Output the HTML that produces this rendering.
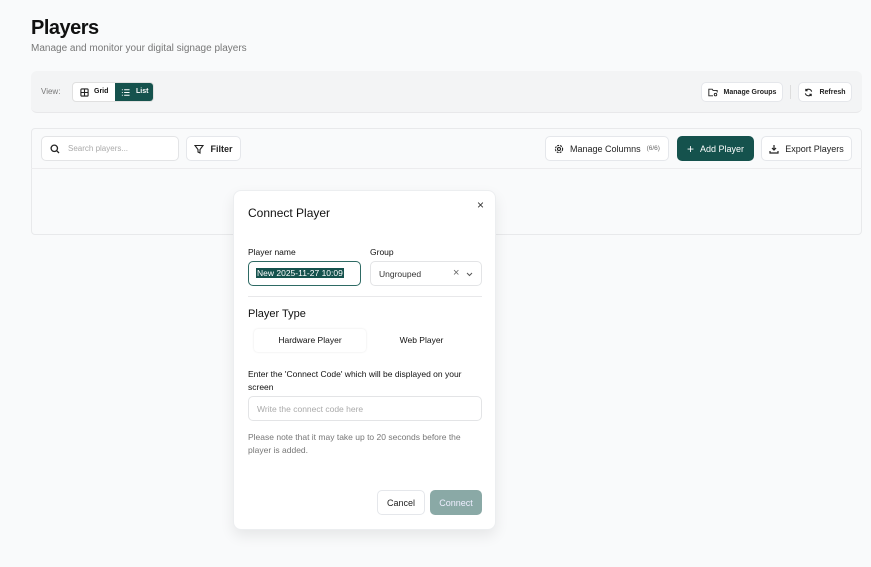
<!DOCTYPE html>
<html><head><style>
*{box-sizing:border-box;margin:0;padding:0}
body{width:871px;height:567px;background:#f9fafb;font-family:"Liberation Sans",sans-serif;color:#111;position:relative;overflow:hidden}
.abs{position:absolute}
.btn{position:absolute;background:#fff;border:1px solid #e5e7eb;border-radius:5px;display:flex;align-items:center;justify-content:center;gap:6px;font-size:9px;font-weight:bold;color:#222}
svg{display:block}
</style></head><body>
<div class="abs" style="left:31px;top:17px;font-size:20px;font-weight:bold;letter-spacing:-0.5px">Players</div>
<div class="abs" style="left:31px;top:43px;font-size:10px;color:#777">Manage and monitor your digital signage players</div>

<div class="abs" style="left:31px;top:71px;width:831px;height:42px;background:#f3f4f5;border-radius:6px;border-bottom:1px solid #e8e8ea"></div>
<div class="abs" style="left:41px;top:87px;font-size:8px;color:#777">View:</div>
<div class="abs" style="left:72px;top:82px;width:82px;height:20px;border:1px solid #e0e0e0;border-radius:4px;background:#fff;overflow:hidden">
  <div class="abs" style="left:7px;top:5px"><svg width="9" height="9" viewBox="0 0 10 10" fill="none" stroke="#222" stroke-width="1.2"><rect x="1" y="1" width="8" height="8" rx="1"/><path d="M5 1v8M1 5h8"/></svg></div>
  <div class="abs" style="left:21px;top:0;line-height:18px;font-size:7px;font-weight:bold">Grid</div>
  <div class="abs" style="left:42px;top:0;width:40px;height:20px;background:#15524d;color:#fff">
    <div class="abs" style="left:6px;top:5px"><svg width="9" height="9" viewBox="0 0 10 10" fill="none" stroke="#fff" stroke-width="1.1"><path d="M1 2h1M1 5h1M1 8h1M3.5 2h6M3.5 5h6M3.5 8h6"/></svg></div>
    <div class="abs" style="left:21px;top:0;line-height:18px;font-size:7px;font-weight:bold">List</div>
  </div>
</div>
<div class="btn" style="left:701px;top:82px;width:82px;height:20px;font-size:7px"><svg width="10" height="9" viewBox="0 0 12 10" fill="none" stroke="#222" stroke-width="1.1"><path d="M6 9H1V1h4l1 1.5h5V5"/><circle cx="9" cy="7.5" r="1.5"/></svg>Manage Groups</div>
<div class="abs" style="left:790px;top:85px;width:1px;height:14px;background:#ddd"></div>
<div class="btn" style="left:798px;top:82px;width:54px;height:20px;font-size:7px"><svg width="9" height="9" viewBox="0 0 10 10" fill="none" stroke="#222" stroke-width="1.2"><path d="M8.5 4A3.6 3.6 0 0 0 2 3M1.5 6A3.6 3.6 0 0 0 8 7M2 1v2h2M8 9V7H6"/></svg>Refresh</div>

<div class="abs" style="left:31px;top:128px;width:831px;height:107px;background:#f9fafb;border:1px solid #e8e9eb;border-radius:4px"></div>
<div class="abs" style="left:31px;top:168px;width:831px;height:1px;background:#ececee"></div>
<div class="abs" style="left:41px;top:136px;width:138px;height:25px;background:#fff;border:1px solid #e3e4e6;border-radius:5px">
  <div class="abs" style="left:8px;top:7px"><svg width="10" height="10" viewBox="0 0 10 10" fill="none" stroke="#222" stroke-width="1.3"><circle cx="4.3" cy="4.3" r="3.2"/><path d="M6.7 6.7L9 9"/></svg></div>
  <div class="abs" style="left:26px;top:7px;font-size:8px;color:#aaa">Search players...</div>
</div>
<div class="btn" style="left:186px;top:136px;width:55px;height:25px"><svg width="10" height="10" viewBox="0 0 10 10" fill="none" stroke="#222" stroke-width="1.1"><path d="M1 1.5h8L6 5.5V9L4 8V5.5z"/></svg>Filter</div>
<div class="btn" style="left:545px;top:136px;width:124px;height:25px;font-weight:normal"><svg width="10" height="10" viewBox="0 0 10 10" fill="none" stroke="#222" stroke-width="1.1"><circle cx="5" cy="5" r="1.5"/><circle cx="5" cy="5" r="3.6" stroke-dasharray="2 1"/></svg>Manage Columns <span style="font-size:6.5px;color:#666">(6/6)</span></div>
<div class="btn" style="left:677px;top:136px;width:77px;height:25px;background:#15524d;border-color:#15524d;color:#fff;font-weight:normal"><span style="font-size:12px">+</span>Add Player</div>
<div class="btn" style="left:761px;top:136px;width:91px;height:25px;font-weight:normal"><svg width="10" height="10" viewBox="0 0 10 10" fill="none" stroke="#222" stroke-width="1.2"><path d="M5 1v5M3 4l2 2 2-2M1 7v2h8V7"/></svg>Export Players</div>

<div class="abs" style="left:233px;top:190px;width:263px;height:340px;background:#fff;border:1px solid #eceef0;border-radius:8px;box-shadow:0 6px 14px rgba(0,0,0,0.08)">
  <div class="abs" style="left:14px;top:15px;font-size:12px;font-weight:500">Connect Player</div>
  <div class="abs" style="left:243px;top:7px;font-size:12px;color:#333">×</div>
  <div class="abs" style="left:14px;top:56px;font-size:8.5px">Player name</div>
  <div class="abs" style="left:136px;top:56px;font-size:8.5px">Group</div>
  <div class="abs" style="left:14px;top:70px;width:113px;height:25px;border:1.5px solid #2e6a64;border-radius:5px">
    <span class="abs" style="left:7px;top:6px;font-size:8.5px;background:#15524d;color:#fff;padding:0 1px">New 2025-11-27 10:09</span>
  </div>
  <div class="abs" style="left:136px;top:70px;width:112px;height:25px;border:1px solid #e3e4e6;border-radius:5px">
    <span class="abs" style="left:8px;top:7px;font-size:8.5px;color:#333">Ungrouped</span>
    <span class="abs" style="left:82px;top:5px;font-size:11px;color:#666;line-height:12px">×</span>
    <svg class="abs" style="left:95px;top:10px" width="7" height="5" viewBox="0 0 7 5" fill="none" stroke="#555"><path d="M1 1l2.5 2.5L6 1"/></svg>
  </div>
  <div class="abs" style="left:14px;top:105px;width:234px;height:1px;background:#e8e8ea"></div>
  <div class="abs" style="left:14px;top:117px;font-size:11px">Player Type</div>
  <div class="abs" style="left:20px;top:138px;width:112px;height:23px;border-radius:4px;box-shadow:0 0 2px rgba(0,0,0,0.1);font-size:8.5px;text-align:center;line-height:23px">Hardware Player</div>
  <div class="abs" style="left:135px;top:138px;width:105px;height:23px;font-size:8.5px;text-align:center;line-height:23px">Web Player</div>
  <div class="abs" style="left:14px;top:177px;width:235px;font-size:8.5px;line-height:13px">Enter the 'Connect Code' which will be displayed on your screen</div>
  <div class="abs" style="left:14px;top:205px;width:234px;height:25px;border:1px solid #e3e4e6;border-radius:5px;font-size:8.5px;color:#aaa;padding:7px 8px">Write the connect code here</div>
  <div class="abs" style="left:14px;top:240px;width:235px;font-size:8.5px;line-height:13px;color:#777">Please note that it may take up to 20 seconds before the player is added.</div>
  <div class="btn" style="left:143px;top:299px;width:48px;height:25px;font-weight:normal">Cancel</div>
  <div class="btn" style="left:196px;top:299px;width:52px;height:25px;background:#8aa9a6;border-color:#8aa9a6;color:#eef;font-weight:normal">Connect</div>
</div>
</body></html>
